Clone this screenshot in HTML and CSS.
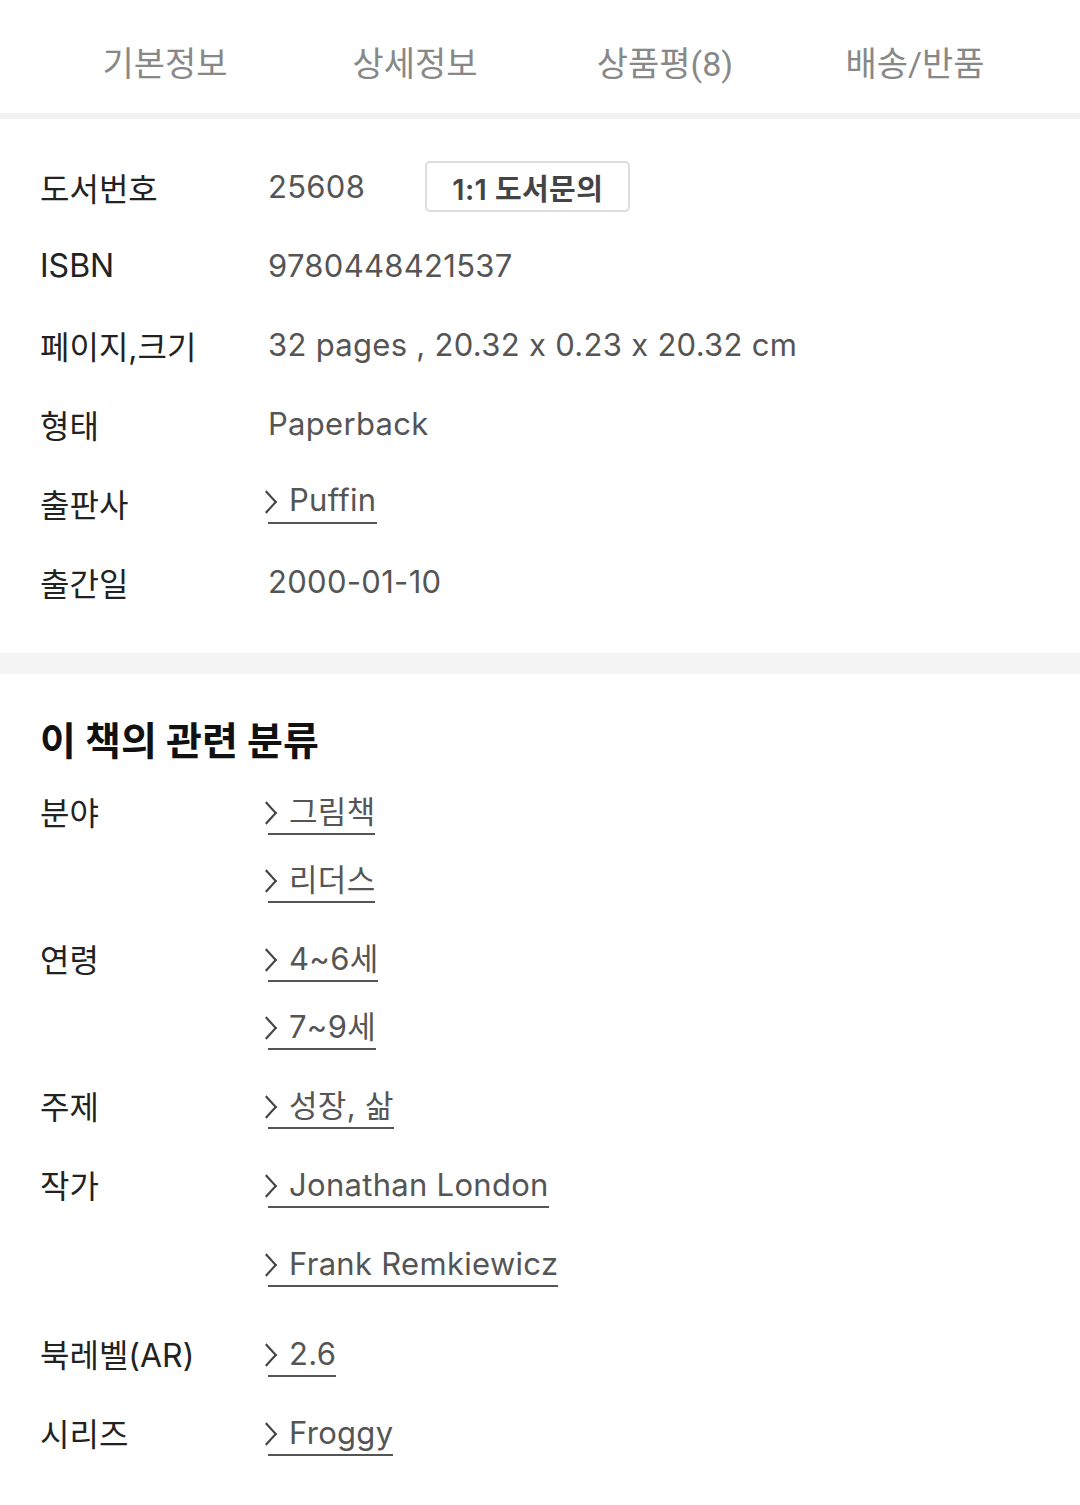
FILE: index.html
```html
<!DOCTYPE html>
<html lang="ko">
<head>
    <meta charset="UTF-8">
    <meta name="viewport" content="width=device-width, initial-scale=1.0">
    <title>도서 기본정보</title>
    <link rel="stylesheet" href="styles.css">
</head>
<body>
    <nav class="tabs">
        <a class="tab">기본정보</a>
        <a class="tab">상세정보</a>
        <a class="tab">상품평(8)</a>
        <a class="tab">배송/반품</a>
    </nav>

    <section class="info">
        <div class="row">
            <div class="label">도서번호</div>
            <div class="value">25608 <button class="ask">1:1 도서문의</button></div>
        </div>
        <div class="row">
            <div class="label">ISBN</div>
            <div class="value">9780448421537</div>
        </div>
        <div class="row">
            <div class="label">페이지,크기</div>
            <div class="value">32 pages , 20.32 x 0.23 x 20.32 cm</div>
        </div>
        <div class="row">
            <div class="label">형태</div>
            <div class="value">Paperback</div>
        </div>
        <div class="row">
            <div class="label">출판사</div>
            <div class="value"><a class="link">Puffin</a></div>
        </div>
        <div class="row">
            <div class="label">출간일</div>
            <div class="value">2000-01-10</div>
        </div>
    </section>

    <div class="divider"></div>

    <section class="category">
        <h2>이 책의 관련 분류</h2>

        <div class="group">
            <div class="label">분야</div>
            <div class="items">
                <div class="item"><a class="link">그림책</a></div>
                <div class="item"><a class="link">리더스</a></div>
            </div>
        </div>
        <div class="group">
            <div class="label">연령</div>
            <div class="items">
                <div class="item"><a class="link">4~6세</a></div>
                <div class="item"><a class="link">7~9세</a></div>
            </div>
        </div>
        <div class="group">
            <div class="label">주제</div>
            <div class="items">
                <div class="item"><a class="link">성장, 삶</a></div>
            </div>
        </div>
        <div class="group">
            <div class="label">작가</div>
            <div class="items">
                <div class="item tall"><a class="link">Jonathan London</a></div>
                <div class="item tall"><a class="link">Frank Remkiewicz</a></div>
            </div>
        </div>
        <div class="group">
            <div class="label">북레벨(AR)</div>
            <div class="items">
                <div class="item"><a class="link">2.6</a></div>
            </div>
        </div>
        <div class="group">
            <div class="label">시리즈</div>
            <div class="items">
                <div class="item"><a class="link">Froggy</a></div>
            </div>
        </div>
    </section>
</body>
</html>
```

FILE: styles.css
```css
body {
    margin: 0;
    background: #fff;
    font-family: Inter, 'Noto Sans CJK KR', sans-serif;
    font-feature-settings: "calt" 0;
    color: #222;
}

/* 상단 탭 */
.tabs {
    display: grid;
    grid-template-columns: repeat(4, 1fr);
    padding: 0 40px;
    height: 113px;
    border-bottom: 6px solid #f2f2f2;
}

.tab {
    display: flex;
    align-items: center;
    justify-content: center;
    font-family: Roboto, 'Noto Sans CJK KR', sans-serif;
    font-size: 34px;
    color: #888;
    padding-top: 10px;
}

/* 기본 정보 */
.info {
    padding: 28px 40px 32px;
}

.row {
    display: flex;
    align-items: center;
    height: 79px;
}

.label {
    width: 228px;
    flex-shrink: 0;
    font-size: 32px;
    color: #222;
}

.value {
    display: flex;
    align-items: center;
    font-size: 31px;
    letter-spacing: 0.3px;
    color: #555;
}

.ask {
    margin-left: 60px;
    height: 51px;
    padding: 0 25px;
    background: #fff;
    border: 2px solid #ddd;
    border-radius: 5px;
    font-family: Inter, 'Noto Sans CJK KR', sans-serif;
    font-size: 29px;
    font-weight: 600;
    letter-spacing: 0.4px;
    color: #444;
}

.link {
    position: relative;
    display: inline-block;
    line-height: 1.2;
    padding: 0 0 3px 21px;
    border-bottom: 2px solid #555;
    color: #555;
}

/* 링크 앞 화살표 */
.link::before {
    content: '';
    position: absolute;
    left: -9px;
    top: 50%;
    width: 13px;
    height: 13px;
    border-right: 2.5px solid #444;
    border-bottom: 2.5px solid #444;
    transform: translateY(-50%) scale(1, 1.1) rotate(-45deg);
}

.divider {
    height: 21px;
    background: #f4f4f4;
}

/* 관련 분류 */
.category {
    padding: 42px 40px 40px;
}

.category h2 {
    margin: 0 0 14px;
    font-size: 39px;
    line-height: 50px;
    font-weight: bold;
    color: #111;
}

.group {
    display: flex;
    margin-bottom: 11px;
}

.group .label {
    height: 68px;
    line-height: 68px;
}

.item {
    height: 68px;
    display: flex;
    align-items: center;
    font-size: 31px;
    letter-spacing: 0.3px;
}

.item.tall {
    margin-bottom: 11px;
}
```
